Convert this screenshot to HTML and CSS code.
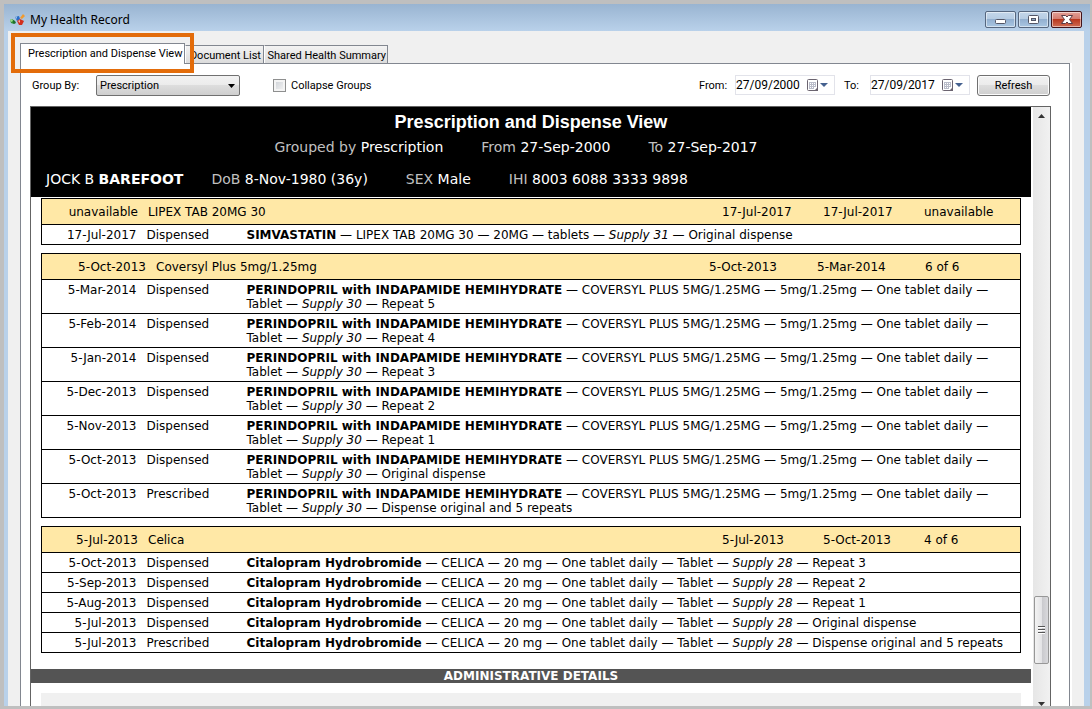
FILE: index.html
```html
<!DOCTYPE html>
<html lang="en">
<head>
    <meta charset="UTF-8">
    <meta name="viewport" content="width=device-width, initial-scale=1.0">
    <title>My Health Record</title>
    <link rel="stylesheet" href="styles.css">
</head>
<body>
    <div class="window">
        <!-- Title bar -->
        <header class="titlebar">
            <svg class="app-icon" width="16" height="16" viewBox="0 0 16 16">
                <path d="M0 8 L2 7 L5 9 L4 12 L1 11 Z" fill="#2f8f35"/>
                <path d="M0 8 L2 7 L3 9 L1 10 Z" fill="#9ddc8c"/>
                <path d="M3 8 L6 10 L5 12 L3 11 Z" fill="#1f6f2c"/>
                <path d="M5 5 L9 4 L10 7 L7 9 Z" fill="#2b6cc4"/>
                <path d="M5 5 L7 4.500 L7 7 Z" fill="#8fc0f0"/>
                <path d="M7 9 L10 7 L14 9 L12 13 L9 13 Z" fill="#d2301f"/>
                <path d="M8 9 L10 8 L10 11 Z" fill="#f5b0a5"/>
                <path d="M10 6 L13 2 L15 4 L12 7 Z" fill="#f29a2e"/>
            </svg>
            <span class="title">My Health Record</span>
            <button class="win-btn" aria-label="Minimize">
                <svg width="29" height="15" viewBox="0 0 29 15"><rect x="9.500" y="7.500" width="10" height="4" rx="1" fill="#fff" stroke="#535666"/></svg>
            </button>
            <button class="win-btn" aria-label="Maximize">
                <svg width="29" height="15" viewBox="0 0 29 15"><rect x="9.500" y="3.500" width="10" height="8" rx="1" fill="#fff" stroke="#535666"/><rect x="12.500" y="6.500" width="4" height="2" fill="#8fa9c6" stroke="#535666"/></svg>
            </button>
            <button class="win-btn win-close" aria-label="Close">
                <svg width="29" height="15" viewBox="0 0 29 15"><path d="M9.500 3.500h4l1.500 1.500 1.500-1.500h4l-3 4 3 4h-4L15 10l-1.500 1.500h-4l3-4z" fill="#fff" stroke="#5a3a44"/></svg>
            </button>
        </header>

        <div class="client">
            <!-- Tabs -->
            <nav class="tabs">
                <button class="tab active">Prescription and Dispense View</button>
                <button class="tab">Document List</button>
                <button class="tab">Shared Health Summary</button>
                <div class="highlight"></div>
            </nav>

            <main class="panel">
                <!-- Filters -->
                <form class="toolbar">
                    <label for="groupBy" class="group-label">Group By:</label>
                    <div class="select-box">
                        <select id="groupBy">
                            <option>Prescription</option>
                        </select>
                        <svg width="7" height="4" viewBox="0 0 7 4"><path d="M0 0h7L3.500 4z" fill="#000"/></svg>
                    </div>
                    <input type="checkbox" id="collapse">
                    <label for="collapse">Collapse Groups</label>

                    <label for="from" class="from-label">From:</label>
                    <div class="date-box">
                        <input type="text" id="from" value="27/09/2000">
                        <button type="button" aria-label="Pick from date">
                            <svg width="21" height="13" viewBox="0 0 21 13"><rect x="0.500" y="0.500" width="10" height="11" rx="1" fill="#fff" stroke="#6b6470"/><path d="M2 3.500h7M2 5.500h7M2 7.500h7M2 9.500h5M2.500 3v7M4.500 3v7M6.500 3v7M8.500 3v5" stroke="#b9bcc9"/><path d="M7 12l4-4v4z" fill="#6b6470"/><path d="M13 4h8l-4 4z" fill="#45618f"/></svg>
                        </button>
                    </div>
                    <label for="to" class="to-label">To:</label>
                    <div class="date-box">
                        <input type="text" id="to" value="27/09/2017">
                        <button type="button" aria-label="Pick to date">
                            <svg width="21" height="13" viewBox="0 0 21 13"><rect x="0.500" y="0.500" width="10" height="11" rx="1" fill="#fff" stroke="#6b6470"/><path d="M2 3.500h7M2 5.500h7M2 7.500h7M2 9.500h5M2.500 3v7M4.500 3v7M6.500 3v7M8.500 3v5" stroke="#b9bcc9"/><path d="M7 12l4-4v4z" fill="#6b6470"/><path d="M13 4h8l-4 4z" fill="#45618f"/></svg>
                        </button>
                    </div>
                    <button type="button" class="refresh">Refresh</button>
                </form>

                <!-- Report -->
                <div class="viewer">
                    <div class="report">
                        <div class="banner">
                            <h1>Prescription and Dispense View</h1>
                            <div class="criteria">
                                <span><i>Grouped by</i> Prescription</span>
                                <span><i>From</i> 27-Sep-2000</span>
                                <span><i>To</i> 27-Sep-2017</span>
                            </div>
                            <div class="patient">
                                <span class="name">JOCK B <b>BAREFOOT</b></span>
                                <span><i>DoB</i> 8-Nov-1980 (36y)</span>
                                <span><i>SEX</i> Male</span>
                                <span><i>IHI</i> 8003 6088 3333 9898</span>
                            </div>
                        </div>

                        <table class="group">
                            <thead>
                                <tr><th colspan="3"><div class="group-head"><span class="date">unavailable</span><span>LIPEX TAB 20MG 30</span><span>17-Jul-2017</span><span>17-Jul-2017</span><span>unavailable</span></div></th></tr>
                            </thead>
                            <tbody>
                                <tr><td class="date">17-Jul-2017</td><td class="kind">Dispensed</td><td><b>SIMVASTATIN</b> — LIPEX TAB 20MG 30 — 20MG — tablets — <em>Supply 31</em> — Original dispense</td></tr>
                            </tbody>
                        </table>

                        <table class="group">
                            <thead>
                                <tr><th colspan="3"><div class="group-head wide"><span class="date">5-Oct-2013</span><span>Coversyl Plus 5mg/1.25mg</span><span>5-Oct-2013</span><span>5-Mar-2014</span><span>6 of 6</span></div></th></tr>
                            </thead>
                            <tbody>
                                <tr><td class="date">5-Mar-2014</td><td class="kind">Dispensed</td><td><b>PERINDOPRIL with INDAPAMIDE HEMIHYDRATE</b> — COVERSYL PLUS 5MG/1.25MG — 5mg/1.25mg — One tablet daily — Tablet — <em>Supply 30</em> — Repeat 5</td></tr>
                                <tr><td class="date">5-Feb-2014</td><td class="kind">Dispensed</td><td><b>PERINDOPRIL with INDAPAMIDE HEMIHYDRATE</b> — COVERSYL PLUS 5MG/1.25MG — 5mg/1.25mg — One tablet daily — Tablet — <em>Supply 30</em> — Repeat 4</td></tr>
                                <tr><td class="date">5-Jan-2014</td><td class="kind">Dispensed</td><td><b>PERINDOPRIL with INDAPAMIDE HEMIHYDRATE</b> — COVERSYL PLUS 5MG/1.25MG — 5mg/1.25mg — One tablet daily — Tablet — <em>Supply 30</em> — Repeat 3</td></tr>
                                <tr><td class="date">5-Dec-2013</td><td class="kind">Dispensed</td><td><b>PERINDOPRIL with INDAPAMIDE HEMIHYDRATE</b> — COVERSYL PLUS 5MG/1.25MG — 5mg/1.25mg — One tablet daily — Tablet — <em>Supply 30</em> — Repeat 2</td></tr>
                                <tr><td class="date">5-Nov-2013</td><td class="kind">Dispensed</td><td><b>PERINDOPRIL with INDAPAMIDE HEMIHYDRATE</b> — COVERSYL PLUS 5MG/1.25MG — 5mg/1.25mg — One tablet daily — Tablet — <em>Supply 30</em> — Repeat 1</td></tr>
                                <tr><td class="date">5-Oct-2013</td><td class="kind">Dispensed</td><td><b>PERINDOPRIL with INDAPAMIDE HEMIHYDRATE</b> — COVERSYL PLUS 5MG/1.25MG — 5mg/1.25mg — One tablet daily — Tablet — <em>Supply 30</em> — Original dispense</td></tr>
                                <tr><td class="date">5-Oct-2013</td><td class="kind">Prescribed</td><td><b>PERINDOPRIL with INDAPAMIDE HEMIHYDRATE</b> — COVERSYL PLUS 5MG/1.25MG — 5mg/1.25mg — One tablet daily — Tablet — <em>Supply 30</em> — Dispense original and 5 repeats</td></tr>
                            </tbody>
                        </table>

                        <table class="group">
                            <thead>
                                <tr><th colspan="3"><div class="group-head"><span class="date">5-Jul-2013</span><span>Celica</span><span>5-Jul-2013</span><span>5-Oct-2013</span><span>4 of 6</span></div></th></tr>
                            </thead>
                            <tbody>
                                <tr><td class="date">5-Oct-2013</td><td class="kind">Dispensed</td><td><b>Citalopram Hydrobromide</b> — CELICA — 20 mg — One tablet daily — Tablet — <em>Supply 28</em> — Repeat 3</td></tr>
                                <tr><td class="date">5-Sep-2013</td><td class="kind">Dispensed</td><td><b>Citalopram Hydrobromide</b> — CELICA — 20 mg — One tablet daily — Tablet — <em>Supply 28</em> — Repeat 2</td></tr>
                                <tr><td class="date">5-Aug-2013</td><td class="kind">Dispensed</td><td><b>Citalopram Hydrobromide</b> — CELICA — 20 mg — One tablet daily — Tablet — <em>Supply 28</em> — Repeat 1</td></tr>
                                <tr><td class="date">5-Jul-2013</td><td class="kind">Dispensed</td><td><b>Citalopram Hydrobromide</b> — CELICA — 20 mg — One tablet daily — Tablet — <em>Supply 28</em> — Original dispense</td></tr>
                                <tr><td class="date">5-Jul-2013</td><td class="kind">Prescribed</td><td><b>Citalopram Hydrobromide</b> — CELICA — 20 mg — One tablet daily — Tablet — <em>Supply 28</em> — Dispense original and 5 repeats</td></tr>
                            </tbody>
                        </table>

                        <h2>ADMINISTRATIVE DETAILS</h2>
                        <div class="admin"></div>
                    </div>

                    <div class="scrollbar">
                        <svg width="17" height="17" viewBox="0 0 17 17"><path d="M5 11h7L8.500 7z" fill="#333"/></svg>
                        <div class="thumb"><span></span><span></span><span></span></div>
                        <svg width="17" height="6" viewBox="0 0 17 6"><path d="M5 2h7L8.500 6z" fill="#333"/></svg>
                    </div>
                </div>
            </main>
        </div>
    </div>
</body>
</html>
```
FILE: styles.css
```css
* {
    box-sizing: border-box;
}

body {
    margin: 0;
    height: 100vh;
    padding: 4px 2px 3px 4px;
    overflow: hidden;
    background: #bfbfbf;
    font-family: Roboto, "Liberation Sans", Arial, sans-serif;
    font-size: 11px;
    line-height: 14px;
    color: #000;
}

button, input, select {
    font: inherit;
    color: inherit;
}

.window {
    height: 100%;
    display: flex;
    flex-direction: column;
    padding: 0 6px 0 4px;
    background: #b9d1ea;
}

/* Title bar */
.titlebar {
    height: 27px;
    flex: none;
    display: flex;
    align-items: center;
    gap: 4px;
    margin: 0 -6px 0 -4px;
    padding: 4px 8px 0 6px;
    background: linear-gradient(#99b4d1, #b9d1ea);
}

.title {
    flex: 1;
    font-family: "Noto Sans", "Open Sans", sans-serif;
    font-size: 12px;
    line-height: 16px;
}

.win-btn {
    width: 31px;
    height: 17px;
    padding: 0;
    border: 1px solid #56677f;
    border-radius: 2px;
    background: linear-gradient(#c3d6ea 0, #b5cbe2 50%, #93b0d0 50%, #a9c6e2 100%);
    box-shadow: inset 0 0 0 1px rgba(255, 255, 255, 0.5);
}

.win-btn + .win-btn {
    margin-left: -2px;
}

.win-btn svg {
    display: block;
}

.win-close {
    border-color: #43141a;
    background: linear-gradient(#e3a097 0, #d4796c 50%, #b9381f 50%, #cf6d54 100%);
}

/* Client area */
.client {
    flex: 1;
    min-height: 0;
    display: flex;
    flex-direction: column;
    padding: 12px 12px 0;
    background: #f0f0f0;
}

.tabs {
    position: relative;
    display: flex;
    align-items: flex-end;
    height: 20px;
    flex: none;
}

.tab {
    height: 18px;
    min-width: 79px;
    padding: 2px 1px 0 2px;
    border: 1px solid #828790;
    border-left-color: #fff;
    border-bottom: 0;
    background: linear-gradient(#f3f3f3, #dcdcdc);
    white-space: nowrap;
}

.tab.active {
    position: relative;
    height: 21px;
    margin-bottom: -1px;
    padding: 0 2px 0 7px;
    border-left-color: #828790;
    background: #fff;
}

/* Callout drawn round the current tab */
.highlight {
    position: absolute;
    left: -9px;
    top: -10px;
    width: 183px;
    height: 40px;
    border: 4px solid #e36c0a;
}

.panel {
    flex: 1;
    min-height: 0;
    display: flex;
    flex-direction: column;
    margin-right: 2px;
    padding: 0 18px 0 9px;
    border: 1px solid #828790;
    border-bottom: 0;
    background: #fff;
    box-shadow: 2px 0 0 #fff;
}

/* Toolbar */
.toolbar {
    display: flex;
    align-items: center;
    height: 42px;
    flex: none;
    padding: 0 1px 0 2px;
}

.toolbar label {
    padding-top: 2px;
}

.group-label {
    width: 64px;
}

.select-box {
    position: relative;
    width: 144px;
    height: 21px;
    margin-right: 33px;
}

.select-box select {
    width: 100%;
    height: 100%;
    padding: 2px 3px 0;
    appearance: none;
    border: 1px solid #707070;
    border-radius: 2px;
    background: linear-gradient(#f2f2f2 0, #ebebeb 50%, #dddddd 50%, #cfcfcf 100%);
}

.select-box svg {
    position: absolute;
    right: 5px;
    top: 9px;
    pointer-events: none;
}

#collapse {
    appearance: none;
    width: 13px;
    height: 13px;
    margin: 0 5px 0 0;
    border: 1px solid #8e8f8f;
    background: linear-gradient(135deg, #cbcfd5, #f6f6f6);
    box-shadow: inset 0 0 0 2px #f4f4f4;
}

.from-label {
    margin-left: auto;
    width: 36px;
}

.to-label {
    width: 26px;
    margin-left: 9px;
}

.date-box {
    display: flex;
    width: 100px;
    height: 20px;
    border: 1px solid #e2e3ea;
}

.date-box input {
    flex: 1;
    min-width: 0;
    padding: 0;
    border: 0;
    background: none;
    font-size: 12px;
}

.date-box button {
    padding: 0 6px 0 0;
    border: 0;
    background: none;
}

.date-box svg {
    display: block;
}

.refresh {
    width: 73px;
    height: 21px;
    margin-left: 7px;
    padding: 2px 0 0;
    border: 1px solid #707070;
    border-radius: 3px;
    background: linear-gradient(#f2f2f2 0, #ebebeb 50%, #dddddd 50%, #cfcfcf 100%);
    box-shadow: inset 0 0 0 1px #fcfcfc;
}

/* Report viewer */
.viewer {
    flex: 1;
    min-height: 0;
    display: flex;
    gap: 2px;
    border: 1px solid #646464;
    border-bottom: 0;
    overflow: hidden;
}

.report {
    flex: 1;
    overflow: hidden;
    font-family: Verdana, "DejaVu Sans", sans-serif;
    font-size: 12px;
}

.banner {
    height: 90px;
    margin-bottom: 1px;
    padding-top: 4px;
    background: #000;
    color: #fff;
    font-size: 14px;
    line-height: 18px;
}

.banner h1 {
    margin: 0;
    font-family: "Liberation Sans", Arial, sans-serif;
    font-size: 18px;
    line-height: 22px;
    text-align: center;
}

.banner i {
    font-style: normal;
    color: #c0c0c0;
}

.criteria {
    display: flex;
    justify-content: center;
    gap: 38px;
    margin-top: 5px;
    padding-right: 30px;
}

.patient {
    display: flex;
    gap: 38px;
    margin-top: 14px;
    padding-left: 15px;
}

.patient .name {
    margin-right: -10px;
}

.group {
    width: calc(100% - 20px);
    margin: 0 10px 8px;
    border-collapse: collapse;
    border: 1px solid #000;
}

.group th {
    padding: 0;
    background: #ffe8a6;
    font-weight: normal;
    text-align: left;
}

.group-head {
    display: grid;
    grid-template-columns: 96px 1fr 101px 101px 96px;
    height: 25px;
    line-height: 26px;
}

.group-head.wide {
    grid-template-columns: 104px 1fr 108px 108px 95px;
}

.group-head .date + span {
    padding-left: 10px;
}

.date {
    text-align: right;
}

.group td {
    padding: 3px 5px 2px;
    border-top: 1px solid #000;
    vertical-align: top;
}

.group td.date {
    width: 100px;
}

.group td.kind {
    width: 100px;
}

.report h2 {
    margin: 16px 0 10px;
    background: #545454;
    color: #fff;
    font-size: 12px;
    line-height: 14px;
    text-align: center;
}

.admin {
    height: 40px;
    margin: 0 10px;
    background: #f0f0f0;
}

/* Scrollbar */
.scrollbar {
    width: 17px;
    flex: none;
    display: flex;
    flex-direction: column;
    background: linear-gradient(90deg, #e6e6e6, #f1f1f1);
}

.thumb {
    width: 15px;
    height: 68px;
    margin: auto 1px 36px;
    display: flex;
    flex-direction: column;
    align-items: center;
    justify-content: center;
    gap: 1px;
    border: 1px solid #979797;
    border-radius: 2px;
    background: linear-gradient(90deg, #f3f3f3 0, #e4e4e6 50%, #c8c8cc 50%, #d9d9dc 100%);
}

.thumb span {
    width: 7px;
    height: 2px;
    border-top: 1px solid #555;
    background: #fff;
}
```
